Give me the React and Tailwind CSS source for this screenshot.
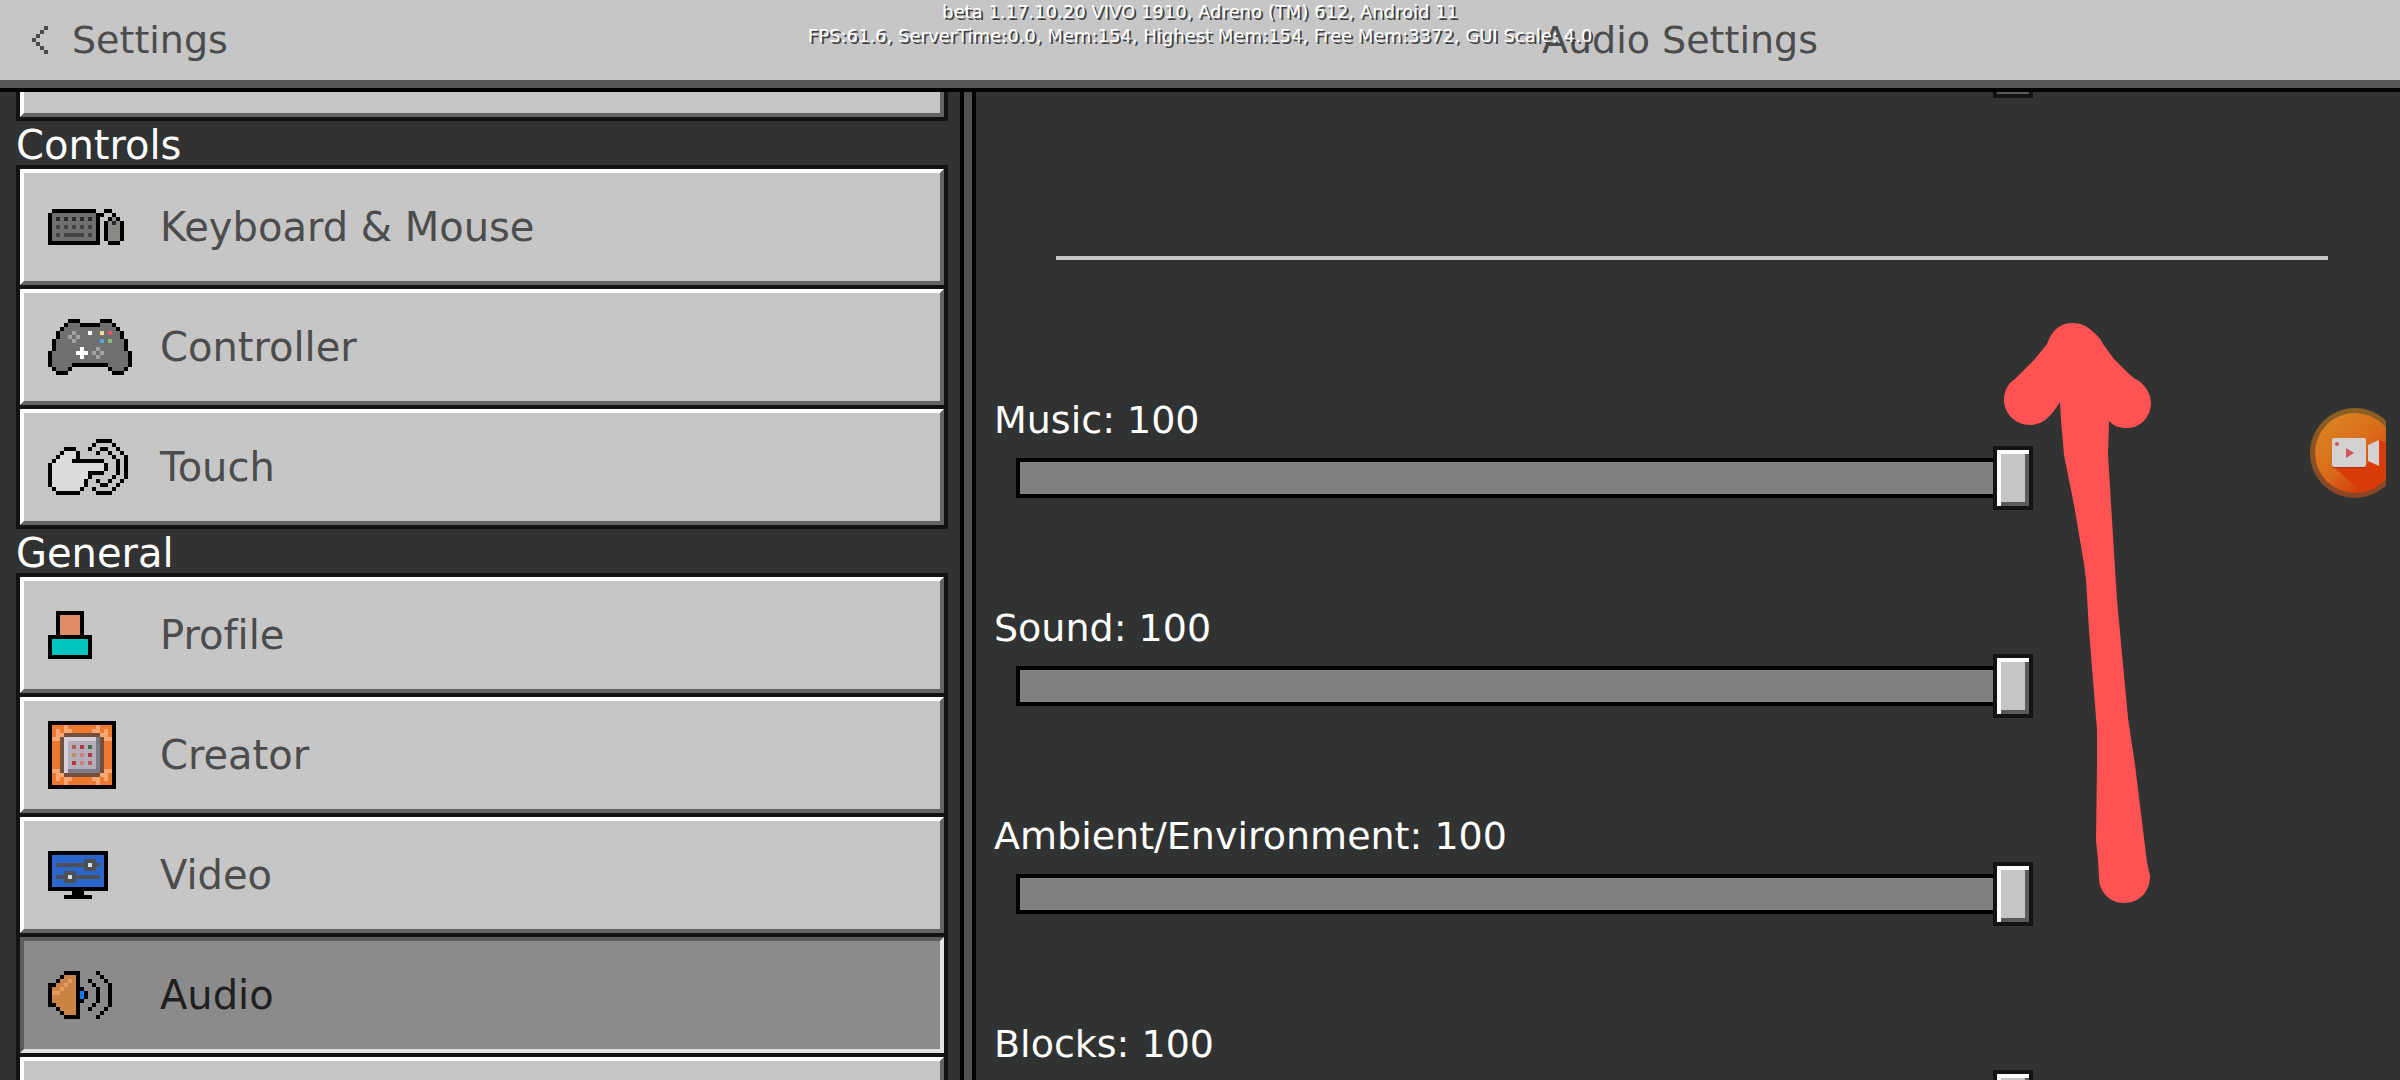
import { useState } from 'react';
import clsx from 'clsx';

const COLORS = {
  K: '#000000',
  g: '#6f6f6f',
  d: '#2a2a2a',
  e: '#454545',
  m: '#8a8985',
  l: '#a3a3a3',
  w: '#dcdcdc',
  W: '#ffffff',
  y: '#f3e08a',
  r: '#e0566a',
  b: '#57a8cf',
  n: '#8fb87c',
  s: '#de8c66',
  c: '#00c3bd',
  o: '#ee7830',
  p: '#f9a673',
  N: '#74503c',
  L: '#d3cfda',
  M: '#b3aeba',
  D: '#7c7a85',
  R: '#b3353f',
  P: '#d07c7c',
  Q: '#b65560',
  G: '#3f6e38',
  Y: '#c08d55',
  u: '#2a66cb',
  v: '#4c5157',
  a: '#cc8445',
  A: '#dd9a62',
  B: '#0a7cf5',
};

const ICONS = {
  keyboard: [
    '.KKKKKKKKKKK..KK...',
    'KgggggggggggKK..K..',
    'KgdgdgdgdgdgK..KmK.',
    'KgggggggggggK.KmdmK',
    'KgegegegegegK.KmmmK',
    'KgggggggggggK.KmmmK',
    'KgegeeeeegegK.KmmmK',
    'KgggggggggggK.KmmmK',
    'KKKKKKKKKKKKK..KKK.',
  ],
  controller: [
    '.....KKK.....KKK.....',
    '....KgggKKKKKgggK....',
    '...KgggggggggggggK...',
    '..KggglgggWggygrggK..',
    '..KgglglggggggggggK..',
    '.KgggglggggggbgngggK.',
    '.KgggggggggggggggggK.',
    '.KggggggWggglggggggK.',
    'KggggggWWWglglggggggK',
    'KgggggggWggglgggggggK',
    'KgggggggggggggggggggK',
    'KgggggKKKKKKKKKgggggK',
    '.KgggK.........KgggK.',
    '..KKK...........KKK..',
  ],
  touch: [
    '............KKKK....',
    '...........K....K...',
    '....KKK...K..KK..K..',
    '...KwwwK....K..K..K.',
    '..KwwwwK........K..K',
    '.KwwwwKKKKKKKK...K.K',
    'KwwwwwwwwwwwwwK..K.K',
    'KwwwwwwwwwwwwwK..K.K',
    'KwwwwwwwwwKKKK...K.K',
    'KwwwwwwwwwK.....K..K',
    'KwwwwwwwwK..K..K..K.',
    'KwwwwwwwwK...KK..K..',
    '.KwwwwwwK..K....K...',
    '..KKKKKK....KKKK....',
  ],
  profile: [
    '..KKKKKKK..',
    '..KsssssK..',
    '..KsssssK..',
    '..KsssssK..',
    '..KsssssK..',
    '..KsssssK..',
    'KKKKKKKKKKK',
    'KcccccccccK',
    'KcccccccccK',
    'KcccccccccK',
    'KcccccccccK',
    'KKKKKKKKKKK',
  ],
  creator: [
    'KKKKKKKKKKKKKKKKK',
    'KooopooooooopoooK',
    'KopoppoooooppopoK',
    'KoppNNNNNNNNNppoK',
    'KppNLLLLLLLLDNppK',
    'KooNLMMMMMMMDNooK',
    'KooNLMQMRMGMDNooK',
    'KooNLMMMMMMMDNooK',
    'KooNLMYMPMRMDNooK',
    'KooNLMMMMMMMDNooK',
    'KooNLMRMPMQMDNooK',
    'KooNLMMMMMMMDNooK',
    'KppNLDDDDDDDDNppK',
    'KoppNNNNNNNNNppoK',
    'KopoppoooooppopoK',
    'KooopooooooopoooK',
    'KKKKKKKKKKKKKKKKK',
  ],
  video: [
    'KKKKKKKKKKKKKKK',
    'KuuuuuuuuuuuuuK',
    'KuuuuuuuuvvvuuK',
    'KuvvvvvvvvwvvuK',
    'KuuuuuuuuvvvuuK',
    'KuuuvvvuuuuuuuK',
    'KuvvvwvvvvvvvuK',
    'KuuuvvvuuuuuuuK',
    'KuuuuuuuuuuuuuK',
    'KKKKKKKKKKKKKKK',
    '......KKK......',
    '....KKKKKKK....',
  ],
  audio: [
    '....KKKK....K...',
    '...KaaaK.....K..',
    '..KaaAaK..K...K.',
    'KKaaAaaK...K...K',
    'KaaAaaaKK...K..K',
    'KAAaaaaKBK..K..K',
    'KaaaaaaKBK..K..K',
    'KaaaaaaKK...K..K',
    'KKaaaaaK...K...K',
    '..KaaaaK..K...K.',
    '...KaaaK.....K..',
    '....KKKK....K...',
  ],
  back: ['...K', '..K.', '.K..', 'K...', '.K..', '..K.', '...K'],
};

function PixelIcon({ name, color }) {
  const rows = ICONS[name];
  return (
    <svg
      width={rows[0].length * 4}
      height={rows.length * 4}
      viewBox={`0 0 ${rows[0].length} ${rows.length}`}
      shapeRendering="crispEdges"
      aria-hidden="true"
    >
      {rows.map((row, y) =>
        [...row].map((cell, x) =>
          cell === '.' ? null : (
            <rect key={`${x}-${y}`} x={x} y={y} width="1" height="1" fill={color || COLORS[cell]} />
          )
        )
      )}
    </svg>
  );
}

const SECTIONS = [
  {
    title: 'Controls',
    items: [
      { icon: 'keyboard', label: 'Keyboard & Mouse' },
      { icon: 'controller', label: 'Controller' },
      { icon: 'touch', label: 'Touch' },
    ],
  },
  {
    title: 'General',
    items: [
      { icon: 'profile', label: 'Profile' },
      { icon: 'creator', label: 'Creator' },
      { icon: 'video', label: 'Video' },
      { icon: 'audio', label: 'Audio' },
    ],
  },
];

const BEVEL =
  'border-4 border-t-white border-l-white border-r-[#646464] border-b-[#646464] bg-[#c6c6c6] shadow-[0_0_0_4px_#131313]';

function MenuButton({ icon, label, active, onClick }) {
  return (
    <button
      onClick={onClick}
      className={clsx(
        'flex h-[116px] w-full items-center px-6 text-left',
        active
          ? 'border-4 border-t-[#5c5c5c] border-l-[#5c5c5c] border-r-[#e2e2e2] border-b-[#e2e2e2] bg-[#8b8b8b] text-[#1f1f1f] shadow-[0_0_0_4px_#131313]'
          : clsx(BEVEL, 'text-[#4c4c4c]')
      )}
    >
      <span className="w-28">
        <PixelIcon name={icon} />
      </span>
      {label}
    </button>
  );
}

function VolumeSlider({ id, label }) {
  const [value, setValue] = useState(100);

  return (
    <div className="mb-[108px] shrink-0">
      <label htmlFor={id} className="block pl-[18px] leading-11 text-white">
        {label}: {value}
      </label>
      <input
        id={id}
        type="range"
        min="0"
        max="100"
        value={value}
        onChange={(e) => setValue(Number(e.target.value))}
        className="mt-4 ml-10 block h-10 w-5/7 appearance-none bg-[#808080] shadow-[inset_0_0_0_4px_#000] [&::-webkit-slider-runnable-track]:h-10 [&::-webkit-slider-thumb]:-mt-3 [&::-webkit-slider-thumb]:h-16 [&::-webkit-slider-thumb]:w-10 [&::-webkit-slider-thumb]:appearance-none [&::-webkit-slider-thumb]:bg-[#c6c6c6] [&::-webkit-slider-thumb]:shadow-[inset_0_0_0_4px_#131313,inset_8px_8px_0_#fff,inset_-8px_-8px_0_#5c5a5c]"
      />
    </div>
  );
}

function RecordButton() {
  return (
    <button aria-label="Record" className="absolute top-[408px] right-3.5">
      <svg width="76" height="90" viewBox="0 0 76 90">
        <defs>
          <linearGradient id="rec" x1="0.15" y1="0.1" x2="0.85" y2="0.9">
            <stop offset="0" stopColor="#da8220" />
            <stop offset="0.5" stopColor="#da6a1a" />
            <stop offset="1" stopColor="#d42f05" />
          </linearGradient>
          <linearGradient id="ring" x1="0" y1="0" x2="0" y2="1">
            <stop offset="0" stopColor="#8b6022" />
            <stop offset="1" stopColor="#8c4527" />
          </linearGradient>
          <clipPath id="disc">
            <circle cx="45" cy="45" r="40" />
          </clipPath>
        </defs>
        <circle cx="45" cy="45" r="45" fill="url(#ring)" />
        <circle cx="45" cy="45" r="40" fill="url(#rec)" />
        <path d="M24 59L56 88H90V40L69 32L56 59Z" fill="#d93c08" clipPath="url(#disc)" />
        <rect x="22" y="31" width="34" height="29" rx="2" fill="#a33016" />
        <rect x="22" y="30" width="34" height="29" rx="2" fill="#d3d1d1" />
        <circle cx="27" cy="36" r="2" fill="#cf5560" />
        <path d="M36 40L44 45L36 50Z" fill="#cf5560" />
        <path d="M58 37L69 32V58L58 53Z" fill="#d3d1d1" />
      </svg>
    </button>
  );
}

function RedArrow() {
  return (
    <svg
      className="pointer-events-none absolute top-[323px] right-[248px]"
      width="148"
      height="581"
      viewBox="2004 323 148 581"
      aria-hidden="true"
    >
      <path
        d="M2073 323C2081 323 2087 326 2092 331Q2100 337 2103 344L2114 359L2128 373Q2133 378 2139 381C2147 387 2151 396 2151 404C2150 418 2140 428 2127 428C2119 428 2114 426 2109 421L2108 455L2112 520L2117 600L2128 718L2135 765L2147 862L2150 876C2150 892 2139 903 2124 903C2110 903 2099 892 2099 878L2098 860L2096 840L2097 765L2097 730L2089 630L2086 580L2084 564L2074 505L2064 455L2061 420L2060 402C2053 413 2045 425 2030 425C2016 425 2004 414 2004 400C2004 392 2007 384 2015 379L2034 360L2047 344C2052 330 2060 323 2073 323Z"
        fill="#ff5353"
      />
    </svg>
  );
}

export default function App() {
  const [active, setActive] = useState('Audio');

  return (
    <div className="relative flex h-screen flex-col overflow-hidden bg-[#313232] font-['DejaVu_Sans',sans-serif] text-[38px] leading-11 [font-variant-ligatures:none]">
      <header className="flex h-[92px] shrink-0 border-b-4 border-black bg-[#c6c6c6] text-[#4c4c4c]">
        <div className="flex w-full border-b-8 border-[#58575a]">
          <div className="flex w-2/5 items-center pl-8">
            <button className="flex items-center gap-6">
              <PixelIcon name="back" color="#4c4c4c" />
              Settings
            </button>
          </div>
          <h1 className="flex flex-1 items-center justify-center">Audio Settings</h1>
        </div>
      </header>

      <div className="pointer-events-none absolute inset-x-0 top-0 text-center text-[18px] leading-6 text-white [text-shadow:2px_2px_0_#3f3f3f]">
        <p>beta 1.17.10.20 VIVO 1910, Adreno (TM) 612, Android 11</p>
        <p>FPS:61.6, ServerTime:0.0, Mem:154, Highest Mem:154, Free Mem:3372, GUI Scale: 4.0</p>
      </div>

      <div className="flex min-h-0 flex-1">
        <nav className="w-2/5 overflow-hidden px-4 text-[40px]">
          <div className={clsx(BEVEL, 'ml-1 h-[25px] border-t-0')} />
          {SECTIONS.map(({ title, items }) => (
            <section key={title}>
              <h2 className="h-[52px] pt-1.5 text-white">{title}</h2>
              <div className="ml-1 flex flex-col gap-1">
                {items.map(({ icon, label }) => (
                  <MenuButton
                    key={label}
                    icon={icon}
                    label={label}
                    active={label === active}
                    onClick={() => setActive(label)}
                  />
                ))}
              </div>
            </section>
          ))}
          <div className={clsx(BEVEL, 'mt-1 ml-1 h-[116px]')} />
        </nav>

        <div className="w-4 border-x-4 border-black bg-[#505051]" />

        <main className="flex flex-1 flex-col overflow-hidden">
          <div className="ml-10 flex w-5/7 justify-end">
            <div className="h-1.5 w-10 border-x-4 border-b-4 border-[#131313] bg-[#5c5a5c]" />
          </div>
          <hr className="mt-[158px] mr-18 mb-[138px] ml-20 h-1 shrink-0 border-0 bg-[#c6c6c6]" />
          <VolumeSlider id="music" label="Music" />
          <VolumeSlider id="sound" label="Sound" />
          <VolumeSlider id="ambient" label="Ambient/Environment" />
          <VolumeSlider id="blocks" label="Blocks" />
        </main>
      </div>

      <RedArrow />
      <RecordButton />
    </div>
  );
}
